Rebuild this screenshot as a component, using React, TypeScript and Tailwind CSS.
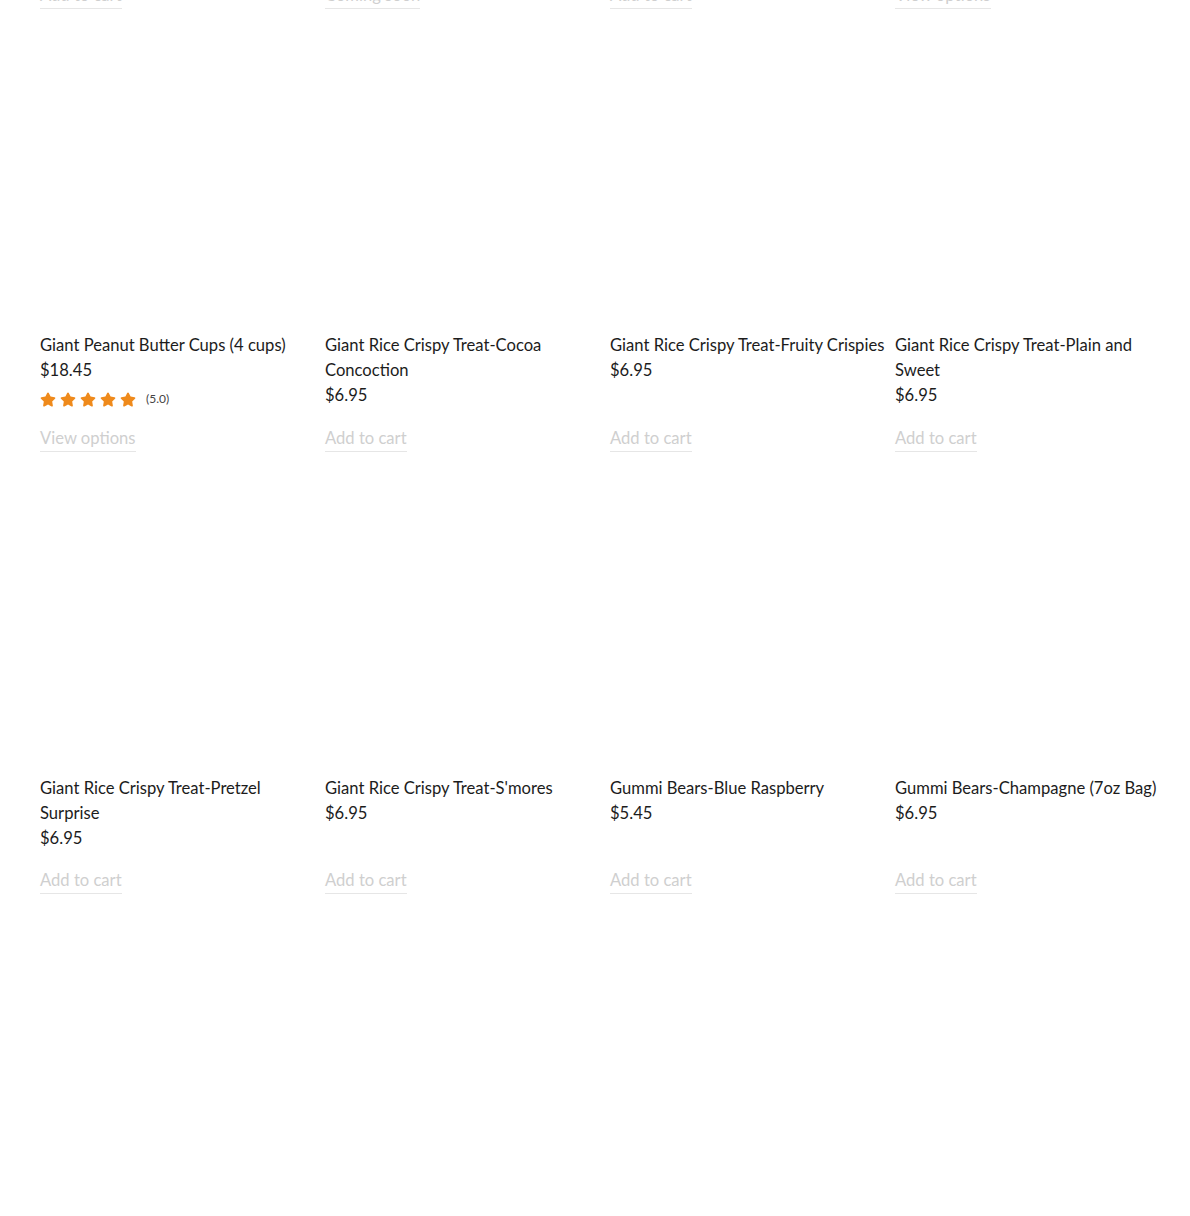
import React from "react";

type P = { title: string; price?: string; action: string; rating?: boolean };

const row0: P[] = [
  { title: "", action: "Add to cart" },
  { title: "", action: "Coming soon" },
  { title: "", action: "Add to cart" },
  { title: "", action: "View options" },
];

const row1: P[] = [
  { title: "Giant Peanut Butter Cups (4 cups)", price: "$18.45", action: "View options", rating: true },
  { title: "Giant Rice Crispy Treat-Cocoa Concoction", price: "$6.95", action: "Add to cart" },
  { title: "Giant Rice Crispy Treat-Fruity Crispies", price: "$6.95", action: "Add to cart" },
  { title: "Giant Rice Crispy Treat-Plain and Sweet", price: "$6.95", action: "Add to cart" },
];

const row2: P[] = [
  { title: "Giant Rice Crispy Treat-Pretzel Surprise", price: "$6.95", action: "Add to cart" },
  { title: "Giant Rice Crispy Treat-S'mores", price: "$6.95", action: "Add to cart" },
  { title: "Gummi Bears-Blue Raspberry", price: "$5.45", action: "Add to cart" },
  { title: "Gummi Bears-Champagne (7oz Bag)", price: "$6.95", action: "Add to cart" },
];

function Star() {
  return (
    <svg width="16" height="15" viewBox="0 0 576 512" className="shrink-0">
      <path
        fill="#ef8a1c"
        d="M316.9 18C311.6 7 300.4 0 288.1 0s-23.4 7-28.8 18L195 150.3 51.4 171.5c-12 1.8-22 10.2-25.7 21.7s-.7 24.2 7.9 32.7L137.8 329 113.2 474.7c-2 12 3 24.2 12.9 31.3s23 8 33.8 2.3l128.3-68.5 128.3 68.5c10.8 5.7 23.9 4.9 33.8-2.3s14.9-19.3 12.9-31.3L438.5 329 542.7 225.9c8.6-8.5 11.7-21.2 7.9-32.7s-13.7-19.9-25.7-21.7L381.2 150.3 316.9 18z"
      />
    </svg>
  );
}

function ActionLink({ label }: { label: string }) {
  return (
    <span className="inline-block self-start border-b border-[#e6e6e6] text-[16.6px] leading-[25px] text-[#cfcfcf]">
      {label}
    </span>
  );
}

function Card({ p }: { p: P }) {
  return (
    <div className="flex flex-col pr-[10px]">
      <div className="h-[275px] w-full bg-white" />
      <div className="mt-[18px] text-[16.6px] leading-[25px] text-[#1c1c1c]">{p.title}</div>
      <div className="text-[16.6px] leading-[25px] text-[#1c1c1c]">{p.price}</div>
      {p.rating && (
        <div className="mt-[6px] flex h-[20px] items-center">
          <div className="flex gap-[4px]">
            <Star />
            <Star />
            <Star />
            <Star />
            <Star />
          </div>
          <span className="ml-[10px] text-[12px] text-[#444]">(5.0)</span>
        </div>
      )}
      <div className="mt-auto pt-[17px]">
        <ActionLink label={p.action} />
      </div>
    </div>
  );
}

export default function App() {
  return (
    <div
      className="h-[1216px] w-[1190px] overflow-hidden bg-white"
      style={{ fontFamily: "Lato, 'Noto Sans', sans-serif" }}
    >
      <div className="-mt-[17px] pl-[40px]">
        <div className="grid grid-cols-[repeat(4,285px)] gap-y-[31px]">
          {row0.map((p, i) => (
            <div key={"a" + i} className="flex flex-col pr-[10px]">
              <ActionLink label={p.action} />
            </div>
          ))}
          {row1.map((p, i) => (
            <Card key={"b" + i} p={p} />
          ))}
          {row2.map((p, i) => (
            <Card key={"c" + i} p={p} />
          ))}
          {row2.map((p, i) => (
            <Card key={"d" + i} p={p} />
          ))}
        </div>
      </div>
    </div>
  );
}
